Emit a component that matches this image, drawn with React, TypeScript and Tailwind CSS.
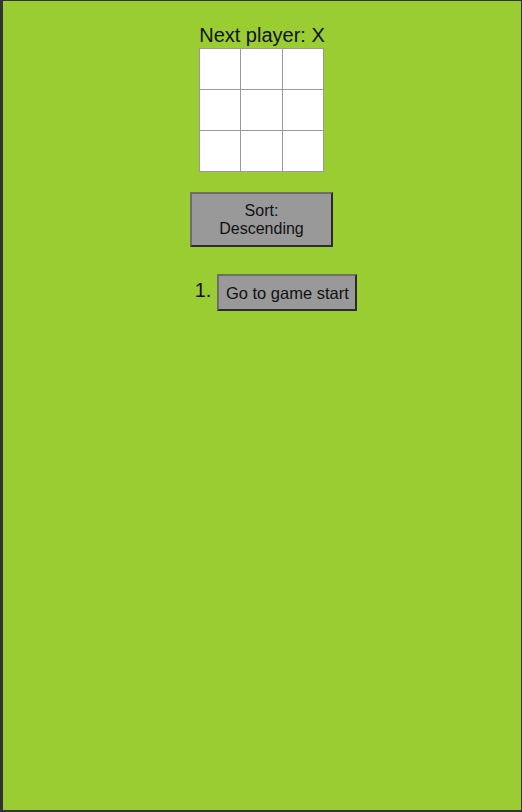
import React from "react";

export default function App() {
  const cells = Array.from({ length: 9 });
  return (
    <div
      className="h-[812px] w-[522px] bg-[#9acd32] border-[#333333] border-l-[3px] border-t border-r border-b-2 text-[#111]"
      style={{ fontFamily: '"Liberation Sans", Arial, sans-serif' }}
    >
      <div className="flex flex-col items-center pt-[23px]">
        <div className="text-[20px] leading-[23px]">Next player: X</div>
        <div className="grid grid-cols-[41px_42px_42px] grid-rows-[41px_41px_42px] mt-[1px] -ml-[1px]">
          {cells.map((_, i) => (
            <div
              key={i}
              className={
                "bg-white border-[#999] border-t border-l " +
                (i % 3 === 2 ? "border-r " : "") +
                (i >= 6 ? "border-b" : "")
              }
            />
          ))}
        </div>
        <button className="mt-[20px] -ml-[1px] w-[143px] h-[55px] bg-[#999999] border-2 border-t-[#6e6e6e] border-l-[#6e6e6e] border-b-[#2a2a2a] border-r-[#2a2a2a] text-[16px] leading-[18px] text-[#111]">
          Sort:
          <br />
          Descending
        </button>
        <div className="mt-[27px] ml-[28px] flex items-center">
          <span className="text-[20px] leading-[23px] mr-[6px] -mt-[4px]">1.</span>
          <button className="w-[140px] h-[37px] bg-[#999999] border-2 border-t-[#6e6e6e] border-l-[#6e6e6e] border-b-[#2a2a2a] border-r-[#2a2a2a] text-[16.5px] leading-[18px] text-[#111]">
            Go to game start
          </button>
        </div>
      </div>
    </div>
  );
}
